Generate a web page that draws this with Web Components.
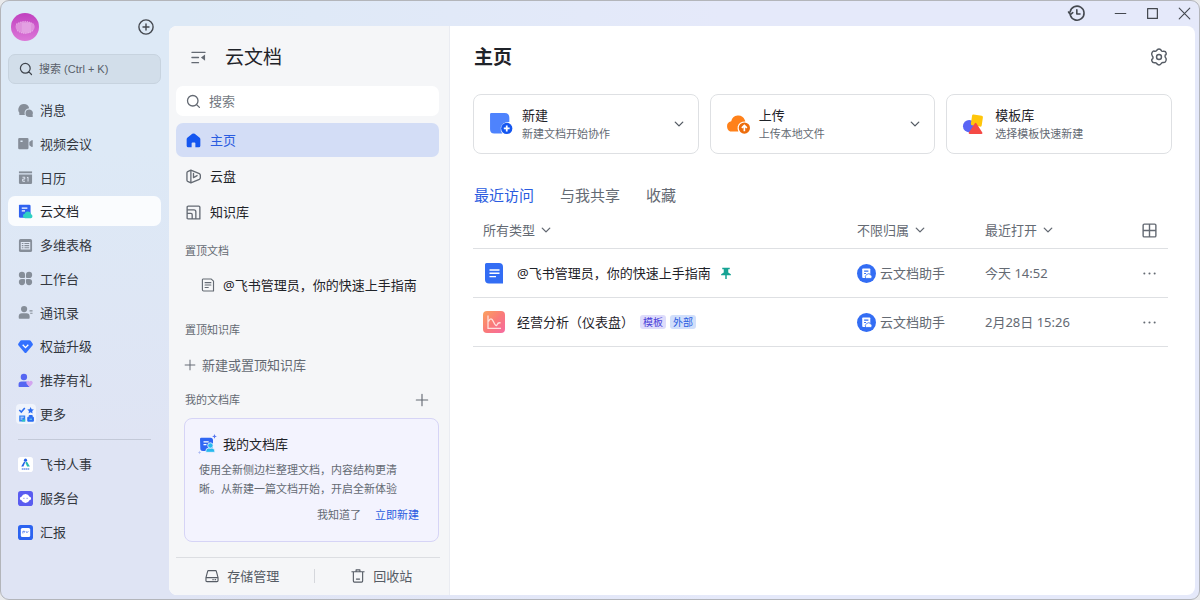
<!DOCTYPE html>
<html lang="zh-CN">
<head>
<meta charset="utf-8">
<meta name="viewport" content="width=device-width, initial-scale=1">
<title>云文档</title>
<style>
  html { background: #e9eaec; }
  body {
    margin: 0;
    font: 13px/20px "Noto Sans", "Noto Sans CJK SC", sans-serif;
    color: #1f2329;
  }
</style>
</head>
<body>
<app-window>
  <nav-rail slot="rail"></nav-rail>
  <window-bar slot="bar"></window-bar>
  <docs-panel slot="panel"></docs-panel>
  <home-page slot="page"></home-page>
</app-window>

<script>
const BASE = `
  *, *::before { box-sizing: border-box; }
  button, select, input { font: inherit; color: inherit; border: 0; background: none; padding: 0; margin: 0; }
  button { cursor: pointer; text-align: left; }
  a { color: inherit; text-decoration: none; }
  h1, h2, h3, p { margin: 0; font-size: 13px; font-weight: 400; }
`;

function define(name, html, setup) {
  const template = document.createElement('template');
  template.innerHTML = html;
  customElements.define(name, class extends HTMLElement {
    constructor() {
      super();
      this.attachShadow({ mode: 'open' }).append(template.content.cloneNode(true));
    }
    connectedCallback() { if (setup) setup(this, this.shadowRoot); }
  });
}

/* Every icon is drawn on a 16-unit grid unless BOXES gives it its own. */
const line = (d, w = 1.3) => `<path d="${d}" fill="none" stroke="currentColor" stroke-width="${w}" stroke-linecap="round" stroke-linejoin="round"/>`;
const ICONS = {
  avatar: `<defs><linearGradient id="g" x1="0" y1="0" x2="0" y2="1"><stop offset="0" stop-color="#c040bf"/><stop offset="1" stop-color="#dc78d8"/></linearGradient></defs>
    <circle cx="8" cy="8" r="8" fill="url(#g)"/><path d="M3.2 6.2Q8 3.4 12.8 6.2Q14.4 8 12.6 10.2Q8 13.4 3.6 10.2Q1.8 8 3.2 6.2z" fill="#de91dc"/>
    <path d="M6.2 5.6h5.2v5.6H6.2z" fill="#e3a0e2"/><path d="M3 6.4Q8 3.2 13 6.4M3.4 10Q8 13.2 12.6 10" fill="none" stroke="#f3c8f1" stroke-width=".5" stroke-dasharray=".5 .8"/>`,
  addCircle: line('M8 .9a7.1 7.1 0 1 0 0 14.2A7.1 7.1 0 0 0 8 .9zM8 5v6M5 8h6', 1.4),
  search: line('M7.2 1.6a5.6 5.6 0 1 0 0 11.2 5.6 5.6 0 0 0 0-11.2zM11.3 11.3l3 3', 1.4),
  chat: `<path d="M6.2 1.2a5.8 5.8 0 0 1 5.7 4.4A5.2 5.2 0 0 0 7 11c0 .7.1 1.2.4 1.8H1.9c-.5 0-.9-.5-.7-1l.4-1.2A5.8 5.8 0 0 1 6.2 1.2z" fill="currentColor"/><path d="M12 6.9a3.9 3.9 0 0 1 3.5 5.7l.3 1.5c.1.4-.2.8-.6.8H12a4 4 0 1 1 0-8z" fill="currentColor"/>`,
  video: `<path fill-rule="evenodd" d="M1.5 2h8.400q1.300 0 1.300 1.300v9.400q0 1.300-1.300 1.300H1.500Q.2 14 .2 12.700V3.300Q.2 2 1.500 2zM2.600 4.800v1.500h2.300V4.800z" fill="currentColor"/><path d="M12.100 6.300l2.500-1.800q1.100-.6 1.100.6v5.900q0 1.200-1.100.6l-2.500-1.800z" fill="currentColor"/>`,
  calendar: `<path d="M1 1.500h14v2H1z" fill="currentColor"/><path d="M1 4.800h14v8.900q0 1.300-1.300 1.300H2.300Q1 15 1 13.700z" fill="currentColor"/><path d="M4.800 7.700h2.400v2H5v2.300h2.500M9.500 8.300l1.200-.7V12.300" fill="none" stroke="#e3eaf5" stroke-width="1"/>`,
  docs: `<path d="M1 1.500Q1 .7 1.800.7H12q1.400 0 1.400 1.500V14.600H2.500Q1 14.600 1 13z" fill="#2f62f0"/><path d="M4 4.500h6M4 7.300h3.500" stroke="#fff" stroke-width="1.300"/><path d="M7.400 15.200a2.500 2.500 0 0 1-.3-4.900A3.600 3.600 0 0 1 14 11a2.200 2.200 0 0 1-.3 4.200z" fill="#2fd0c3"/>`,
  base: `<rect x="1" y="1" width="14" height="14" rx="1.800" fill="currentColor"/><path d="M3.500 4.700h9v6.900h-9zM3.500 7h9M3.500 9.300h9M6.300 4.700v6.900" fill="none" stroke="#dfe7f4" stroke-width="1.100"/>`,
  apps: `<path d="M4.200.9A3.300 3.300 0 0 1 7.500 4.200V6.500q0 1-1 1H4.200a3.300 3.300 0 1 1 0-6.600zM11.800.9a3.300 3.300 0 1 1 0 6.600H9.500q-1 0-1-1V4.200A3.300 3.300 0 0 1 11.800.9zM4.200 15.100a3.300 3.300 0 1 1 0-6.600H6.500q1 0 1 1v2.300a3.300 3.300 0 0 1-3.300 3.300zM11.800 15.100a3.300 3.300 0 0 1-3.300-3.300V9.500q0-1 1-1h2.300a3.300 3.300 0 1 1 0 6.600z" fill="currentColor"/>`,
  contacts: `<circle cx="6.500" cy="4.300" r="3.300" fill="currentColor"/><path d="M.8 13.800V12q0-3.200 3.400-3.200H9q3.400 0 3.400 3.200v1.800q0 .8-.8.8H1.600q-.8 0-.8-.8z" fill="currentColor"/><path d="M12.300 6.300h3.200M13 8.800h2.500" stroke="currentColor" stroke-width="1.200"/>`,
  gem: `<path d="M3.800 1.200h8.400q.8 0 1.300.6l2.200 3.200q.5.900-.1 1.600l-6.500 7.700q-1.100 1.200-2.200 0L.4 6.600q-.6-.7-.1-1.600l2.200-3.200q.5-.6 1.300-.6z" fill="#3270ff"/><path d="M5 6.200l3 3 3-3" fill="none" stroke="#fff" stroke-width="1.400"/>`,
  invite: `<circle cx="6.300" cy="4.200" r="3.400" fill="#5566f2"/><path d="M.6 14V12q0-3 3.200-3h4.900q1.300 0 1.600 1 0 3 1.900 4.800H1.400q-.8 0-.8-.8z" fill="#5566f2"/><path d="M12.300 14.800L9.300 11.600q-1.100-1.700.3-2.900 1.500-.9 2.700.5 1.200-1.400 2.700-.5 1.400 1.200.3 2.900z" fill="#d3a5ef"/>`,
  more: `<rect width="20" height="20" rx="4" fill="#f0f4fc"/><path d="M3.300 6l2 2 3.500-4" fill="none" stroke="#2b6df2" stroke-width="1.600"/><path d="M14.600 3l1 2.200 2.300.3-1.700 1.600.4 2.400-2-1.200-2.100 1.200.5-2.400-1.700-1.600 2.300-.3z" fill="#2b6df2"/><path d="M3.200 11.500h6v6h-6z" fill="#2f80f5"/><path d="M4.500 13.200h3.200M4.500 15h2" stroke="#fff" stroke-width=".8"/><path d="M11.800 13.300h5.600v3.900h-5.600zM13.200 13v-1.500h3V13" fill="#2b6df2" stroke="#2b6df2"/><path d="M5.700 17.500q0-2.300 3.500-2.300V17.500z" fill="#30c8be"/><path d="M13.500 15.200h2.500" stroke="#73d7ef"/>`,
  hr: `<rect width="16" height="16" rx="3" fill="#fff"/><circle cx="8" cy="3.400" r="1.700" fill="#2361e8"/><path d="M7.800 5.200l-2 4.800H3.400L6.400 5.100z" fill="#2361e8"/><path d="M8.400 5.200h1.400l2.900 4.800H9.700L8 6.400z" fill="#28b9ae"/><path d="M4 12.800h8" stroke="#6d93ec" stroke-width="1.600" stroke-dasharray="1.700 .4"/>`,
  desk: `<rect width="16" height="16" rx="3" fill="#5a5cf0"/><path d="M8 3.300a4.600 4.600 0 0 1 4.300 2.900q1.700.1 1.700 1.900T12.200 9.900A4.600 4.600 0 0 1 8 12.800 4.600 4.600 0 0 1 3.800 9.900Q2 9.900 2 8.100T3.700 6.200A4.600 4.600 0 0 1 8 3.300z" fill="#fff"/><path d="M6.300 7.300v1M9.700 7.300v1" stroke="#5a5cf0"/>`,
  report: `<rect width="16" height="16" rx="3" fill="#2c63f0"/><rect x="3" y="3.200" width="10" height="9.600" rx="1.600" fill="#fff"/><path d="M5.200 9V6.700h1.700V8M8.500 6.600l1 1.700 1.500-1.700" fill="none" stroke="#4877ee" stroke-width=".9"/>`,
  history: line('M2.200 9.700A6.600 6.600 0 1 0 2 6.500M.5 6.600L2.200 9 4.500 7.200M8.300 4.500v4h3', 1.500),
  minimize: line('M1.500 8h13', 1.400), maximize: line('M2 2h12v12h-12z', 1.500), close: line('M1.500 1.500l13 13M14.500 1.500l-13 13', 1.400),
  fold: line('M1 2.500h14M1 8h7M1 13.500h7', 1.400) + `<path d="M15 4.800v6.600L10.600 8.100z" fill="currentColor"/>`,
  home: `<path d="M6.700.9q1.300-.8 2.600 0l5 3.800q1 .7 1 1.900V13.700q0 1.600-1.600 1.600H10V11q0-1-1-1H7q-1 0-1 1v4.300H2.300Q.7 15.300.7 13.700V6.600q0-1.200 1-1.900z" fill="#1456f0"/>`,
  drive: line('M5.200 1.200L1.800 2.800Q1 3.200 1 4v8q0 .8.800 1.200l3.400 1.600V1.200l9 3.800Q15.300 5.600 15.300 6.600v2.800q0 1-1.100 1.600l-9 3.800M8 4.800v4.400M8 9.200l3.800-2.200', 1.400),
  wiki: line('M2.400 1.200h11.200q1.200 0 1.200 1.200V14.800H2.200Q1.200 14.800 1.200 13.800V2.400q0-1.200 1.200-1.200zM1.200 5.200h7.300q2 0 2 2v7.600M1.200 9h4.100q1.300 0 1.300 1.300v4.500', 1.400),
  page: line('M2.300 1.200h9.500L14.300 3.500V14.800H3Q1.600 14.800 1.600 13.500V2.300Q1.600 1.200 2.300 1.200zM4.700 5.300h6.600M4.700 8h6.600M4.700 10.800h3.600'),
  plus: line('M8 1.500v13M1.500 8h13'),
  library: `<path d="M1 5Q1 3.800 2.200 3.800H11.500q2.500 0 2.500 2.500V17H4Q1.300 17 1.300 14.500z" fill="#2f66f3"/><path d="M4.500 7.800h5.200M4.500 10.600h3" stroke="#fff" stroke-width="1.300"/><path d="M6.800 18.300V17q0-3 3.200-3h2.600q3.200 0 3.200 3v1.300z" fill="#27b9ee" stroke="#f3f3ff" stroke-width=".8"/><circle cx="11.400" cy="11.500" r="2.700" fill="#27b9ee" stroke="#f3f3ff" stroke-width=".8"/><path d="M15.500 0l.7 1.700 1.700.7-1.700.7-.7 1.700-.7-1.700-1.700-.7 1.700-.7z" fill="#5575ee"/><path d="M.5 16.800l.5 1.200 1.200.5-1.200.5-.5 1.200-.5-1.200-1.200-.5 1.200-.5z" fill="#a9b7f3"/>`,
  storage: line('M4 1.800h8q.8 0 1 .8l1.900 7.200v3.400q0 1.200-1.200 1.200H2.300q-1.200 0-1.200-1.200V9.800L3 2.600q.2-.8 1-.8zM1.200 9.800h13.600M11.500 12.200h.6M9 12.200h.4'),
  trash: line('M1 3.200h14M2.700 3.200V13.800q0 1.200 1.200 1.200h8.200q1.200 0 1.200-1.200V3.200M5.800 3V1h4.400v2M6.200 11.500h3.600'),
  gear: line('M6.500 1.500Q8 .3 9.500 1.500L10.400 2.600Q11 3.200 12 2.900 13.900 2.700 14.300 4.400T13.500 6.300Q12.900 8 14.300 9.300 14.800 11 13.700 12.300 12.900 13.200 11.300 12.900 10.400 13 9.900 13.900 8.500 15.800 6.700 14.600L5.800 13.500Q5.200 12.900 4.200 13.100 2.300 13.300 1.700 11.600T2.500 9.600Q3.200 8 2 7 .9 5.500 1.900 3.900T4 2.900Q5.200 3.100 5.700 2.500zM8 5.800a2.200 2.200 0 1 0 0 4.400 2.200 2.200 0 0 0 0-4.400z'),
  create: `<path d="M1 2.200Q1 1 2.200 1H15q4.500 0 4.500 4.500V9.500Q13 9.500 11.300 14.500q-.6 3.500 1.500 6H5q-4 0-4-4z" fill="#4e83fd"/><circle cx="17" cy="15.800" r="5.400" fill="#1456f0"/><path d="M17 13v5.600M14.200 15.800h5.600" stroke="#fff" stroke-width="1.700"/>`,
  upload: `<path d="M6 18.800a5 5 0 0 1-1-9.900A6.800 6.800 0 0 1 18 7.700q.5 1 .5 1.500Q12.500 9.300 11.200 14q-.5 2.600.7 4.800z" fill="#ff811a"/><circle cx="17.600" cy="15.400" r="5.400" fill="#ed6d0c"/><path d="M17.600 18.500V13M15.200 15.200l2.400-2.400 2.400 2.400" fill="none" stroke="#fff" stroke-width="1.600"/>`,
  template: `<circle cx="7.200" cy="13.200" r="6.200" fill="#5a64f5"/><path d="M11.500 1.500l8.200 1.300q1.400.2 1.200 1.600l-1.200 8q-.3 1.400-1.700 1.200l-8-1.300Q8.600 12 8.900 10.600l1.200-8q.2-1.300 1.400-1.100z" fill="#ffc60a"/><path d="M12.700 10.500q.9-1.400 1.800 0l5.800 9q.7 1.400-.8 1.400H7.700q-1.500 0-.8-1.400z" fill="#f54a45"/>`,
  chevron: line('M3 5.500l5 5 5-5', 1.800),
  grid: line('M2.500 1.200h11q1.300 0 1.300 1.300v11q0 1.300-1.300 1.300h-11q-1.300 0-1.300-1.300v-11q0-1.300 1.300-1.300zM8 1.200v13.600M1.200 8h13.600', 1.500),
  dots: `<circle cx="2.500" cy="8" r="1.100" fill="currentColor"/><circle cx="8" cy="8" r="1.100" fill="currentColor"/><circle cx="13.500" cy="8" r="1.100" fill="currentColor"/>`,
  docFile: `<path d="M2 2.500Q2 1 3.500 1H16q4 0 4 4v16.500H6q-4 0-4-4z" fill="#336df4"/><path d="M6.500 8h10M6.500 11.300h10M6.500 14.600h6.500" stroke="#fff" stroke-width="1.400"/>`,
  chartFile: `<defs><linearGradient id="g" x1="0" y1="0" x2="1" y2="1"><stop offset="0" stop-color="#fba25f"/><stop offset=".5" stop-color="#fa7b78"/><stop offset="1" stop-color="#f66aa2"/></linearGradient></defs><rect width="22" height="22" rx="4" fill="url(#g)"/><path d="M5 4.500v12.800h13M5.500 10.500q2.500-5.500 5 .2t3.600 3 3.600-1.700" fill="none" stroke="#ffe0dc" stroke-width="1.300"/>`,
  pin: `<path d="M3 1h10v2h-2v4.200l3.500 2.300v1.400H9V16H7v-5.100H1.500V9.500L5 7.200V3H3z" fill="#16a394"/>`,
  owner: `<circle cx="10" cy="10" r="10" fill="#336df4"/><path d="M5.500 5.500Q5.500 4.800 6.200 4.800h7q.8 0 .8.800V14.800H6.500q-1 0-1-1z" fill="#fff"/><path d="M7.500 7.500h4.500M7.500 10h2" stroke="#336df4" stroke-width="1.200"/><path d="M10 15.200a1.900 1.900 0 0 1 0-3.600 2.500 2.500 0 0 1 4.600.3 1.700 1.700 0 0 1 0 3.300z" fill="#fff" stroke="#336df4" stroke-width=".9"/>`
};
const BOXES = { more: 20, library: 20, create: 23, upload: 23, template: 22, docFile: 22, chartFile: 22, owner: 20 };

define('ui-icon', `<style>:host { display: block; flex: none; width: var(--size, 16px); height: var(--size, 16px); } svg { display: block; width: 100%; height: 100%; overflow: visible; }</style><div></div>`,
  (host, root) => {
    const name = host.getAttribute('name');
    const size = host.getAttribute('size');
    const box = BOXES[name] || 16;
    host.style.setProperty('--size', size + 'px');
    root.querySelector('div').innerHTML = `<svg viewBox="0 0 ${box} ${box}" width="${size}" height="${size}" aria-hidden="true">${ICONS[name]}</svg>`;
  });

/* ---------- window frame ---------- */
define('app-window', `<style>${BASE}
  :host {
    box-sizing: border-box; display: grid; min-height: 100vh;
    grid-template: 25px 1fr / 168px 1fr;
    border: 1px solid #b3b5ba; border-radius: 9px; padding: 0 4px 4px 0;
    background: linear-gradient(90deg, rgba(229,233,250,0) 15%, #e5e9fa 60%), linear-gradient(180deg, #dde9f6 25%, #dfe4f4 75%);
  }
  .rail { grid-row: 1 / 3; }
  .body { display: grid; grid-template-columns: 281px 1fr; background: #fff; border-radius: 8px; overflow: hidden; }
</style>
<div class="rail"><slot name="rail"></slot></div>
<slot name="bar"></slot>
<div class="body"><slot name="panel"></slot><slot name="page"></slot></div>`);

define('window-bar', `<style>${BASE}
  :host { display: flex; align-items: center; justify-content: flex-end; gap: 19px; padding-right: 4px; color: #44484f; }
  .history { margin-right: 10px; }
</style>
<button class="history" aria-label="历史"><ui-icon name="history" size="17"></ui-icon></button>
<button aria-label="最小化"><ui-icon name="minimize" size="13"></ui-icon></button>
<button aria-label="最大化"><ui-icon name="maximize" size="13"></ui-icon></button>
<button aria-label="关闭"><ui-icon name="close" size="13"></ui-icon></button>`);

/* ---------- left rail ---------- */
define('rail-item', `<style>${BASE}
  :host { display: block; color: #33373e; }
  a { display: flex; align-items: center; gap: 7px; height: 30px; padding-left: 10px; border-radius: 7px; }
  :host([active]) a { background: #fafcfe; color: #1f2329; }
  .icon { display: flex; align-items: center; justify-content: center; width: 15px; color: #868e99; }
</style>
<a href="#"><span class="icon"></span><slot></slot></a>`,
  (host, root) => {
    const name = host.getAttribute('icon');
    root.querySelector('.icon').innerHTML = `<ui-icon name="${name}" size="${name === 'more' ? 20 : 15}"></ui-icon>`;
    if (host.hasAttribute('active')) root.querySelector('a').setAttribute('aria-current', 'page');
  });

define('nav-rail', `<style>${BASE}
  :host { display: block; padding: 12px 8px 0 7px; }
  header { display: flex; align-items: center; justify-content: space-between; padding: 0 7px 0 3px; color: #44484f; }
  .search {
    display: flex; align-items: center; gap: 6px; width: 100%; height: 30px; margin: 13px 0 11px;
    padding-left: 10px; border: 1px solid #c7d3df; border-radius: 7px; background: #d2deea;
    font: 11px/16px "Liberation Sans", "Noto Sans CJK SC", sans-serif; color: #595f69;
  }
  .search ui-icon { color: #3f444c; }
  nav { display: flex; flex-direction: column; justify-content: space-between; min-height: 334px; }
  hr { height: 1px; margin: 10px 10px 9px; border: 0; background: #c3c9d8; }
  nav.extra { justify-content: flex-start; gap: 4px; min-height: 0; }
</style>
<header>
  <button aria-label="个人头像"><ui-icon name="avatar" size="28"></ui-icon></button>
  <button aria-label="新建"><ui-icon name="addCircle" size="16"></ui-icon></button>
</header>
<button class="search"><ui-icon name="search" size="14"></ui-icon><span>搜索 (Ctrl + K)</span></button>
<nav aria-label="主导航">
  <rail-item icon="chat">消息</rail-item>
  <rail-item icon="video">视频会议</rail-item>
  <rail-item icon="calendar">日历</rail-item>
  <rail-item icon="docs" active>云文档</rail-item>
  <rail-item icon="base">多维表格</rail-item>
  <rail-item icon="apps">工作台</rail-item>
  <rail-item icon="contacts">通讯录</rail-item>
  <rail-item icon="gem">权益升级</rail-item>
  <rail-item icon="invite">推荐有礼</rail-item>
  <rail-item icon="more">更多</rail-item>
</nav>
<hr>
<nav class="extra" aria-label="应用">
  <rail-item icon="hr">飞书人事</rail-item>
  <rail-item icon="desk">服务台</rail-item>
  <rail-item icon="report">汇报</rail-item>
</nav>`);

/* ---------- docs panel ---------- */
define('docs-panel', `<style>${BASE}
  :host { box-sizing: border-box; display: flex; flex-direction: column; padding: 0 10px 0 7px; background: #f5f6f8; border-right: 1px solid #eaecf2; }
  header { display: flex; align-items: center; gap: 19px; padding: 17px 15px 15px; color: #646a73; }
  h1 { font-size: 19px; line-height: 28px; color: #1f2329; }
  label { display: flex; align-items: center; gap: 8px; height: 30px; padding: 0 10px; border-radius: 7px; background: #fff; color: #646a73; }
  input { flex: 1; min-width: 0; outline: 0; }
  input::placeholder { color: #737881; opacity: 1; }
  .links { display: grid; gap: 2px; margin-top: 7px; }
  .links a { display: flex; align-items: center; gap: 9px; height: 34px; padding-left: 10px; border-radius: 7px; }
  .links ui-icon { color: #646a73; }
  .links a[aria-current] { background: #d3ddf6; color: #2a5ce0; }
  h2 { display: flex; align-items: center; justify-content: space-between; height: 20px; padding: 0 10px 0 9px; font-size: 11px; color: #646a73; }
  .links + h2 { margin-top: 12px; }
  .pinned { display: flex; align-items: center; gap: 8px; height: 30px; padding-left: 25px; margin: 9px 0 20px; white-space: nowrap; }
  .pinned ui-icon, .add, h2 button { color: #646a73; }
  .add { display: flex; align-items: center; gap: 6px; height: 30px; margin: 10px 0; padding-left: 8px; }
  section { margin: 8px 0 0 8px; padding: 15px 19px 16px 14px; border: 1px solid #d6d4f6; border-radius: 8px; background: #f3f3fe; }
  h3 { display: flex; align-items: center; gap: 4px; }
  section p { margin-top: 6px; padding-right: 16px; font-size: 11px; line-height: 19px; color: #646a73; }
  .actions { display: flex; justify-content: flex-end; gap: 14px; margin-top: 7px; font-size: 11px; color: #646a73; }
  .actions .go { color: #2a5ce0; }
  footer { display: grid; grid-template-columns: 10fr 1px 9fr; align-items: center; justify-items: center; height: 38px; margin: auto -1px 0 0; padding-bottom: 2px; border-top: 1px solid #dcdee2; color: #565c65; }
  footer i { width: 1px; height: 14px; background: #d5d7dc; }
  footer a { display: flex; align-items: center; gap: 8px; }
  footer a:first-child { padding-right: 6px; }
  footer a:last-child { padding-left: 8px; }
</style>
<header><button aria-label="收起侧栏"><ui-icon name="fold" size="15"></ui-icon></button><h1>云文档</h1></header>
<label><ui-icon name="search" size="15"></ui-icon><input type="search" placeholder="搜索" aria-label="搜索"></label>
<nav class="links">
  <a href="#" aria-current="page"><ui-icon name="home" size="15"></ui-icon><span>主页</span></a>
  <a href="#"><ui-icon name="drive" size="15"></ui-icon><span>云盘</span></a>
  <a href="#"><ui-icon name="wiki" size="15"></ui-icon><span>知识库</span></a>
</nav>
<h2>置顶文档</h2>
<a class="pinned" href="#"><ui-icon name="page" size="14"></ui-icon><span>@飞书管理员，你的快速上手指南</span></a>
<h2>置顶知识库</h2>
<button class="add"><ui-icon name="plus" size="12"></ui-icon><span>新建或置顶知识库</span></button>
<h2><span>我的文档库</span><button aria-label="新建文档"><ui-icon name="plus" size="14"></ui-icon></button></h2>
<section>
  <h3><ui-icon name="library" size="20"></ui-icon><span>我的文档库</span></h3>
  <p>使用全新侧边栏整理文档，内容结构更清晰。从新建一篇文档开始，开启全新体验</p>
  <div class="actions"><button>我知道了</button><button class="go">立即新建</button></div>
</section>
<footer>
  <a href="#"><ui-icon name="storage" size="14"></ui-icon><span>存储管理</span></a><i></i>
  <a href="#"><ui-icon name="trash" size="14"></ui-icon><span>回收站</span></a>
</footer>`);

/* ---------- home page ---------- */
define('quick-card', `<style>${BASE}
  :host { display: block; }
  button { display: grid; grid-template-columns: 24px 1fr 12px; align-items: center; column-gap: 9px; width: 100%; height: 60px; padding: 0 13px 0 15px; border: 1px solid #dee0e3; border-radius: 8px; background: #fff; }
  b, small { display: block; font-weight: 400; }
  b { line-height: 20px; }
  small { font-size: 11px; line-height: 18px; color: #646a73; }
</style>
<button><slot name="icon"></slot><span><b><slot></slot></b><small><slot name="note"></slot></small></span><slot name="arrow"></slot></button>`);

define('filter-select', `<style>${BASE}
  :host { display: inline-grid; grid-template-columns: 1fr 12px; align-items: center; column-gap: 4px; color: #646a73; }
  select { grid-area: 1 / 1 / 2 / 3; appearance: none; outline: 0; height: 20px; padding-right: 16px; }
  ui-icon { grid-area: 1 / 2; pointer-events: none; }
</style>
<select></select><ui-icon name="chevron" size="12"></ui-icon>`,
  (host, root) => {
    const select = root.querySelector('select');
    select.setAttribute('aria-label', host.getAttribute('value'));
    select.replaceChildren(new Option(host.getAttribute('value')));
  });

define('doc-table', `<style>${BASE}
  :host { display: block; }
  table { width: 100%; border-collapse: separate; border-spacing: 0; table-layout: fixed; }
  th, td { padding: 0 10px; border-bottom: 1px solid #dee0e3; text-align: left; font-weight: 400; vertical-align: middle; color: #646a73; white-space: nowrap; }
  th { height: 37px; } td { height: 49px; }
  .owner { width: 128px; } .time { width: 156px; } .tools { width: 37px; }
  .tools, td:last-child { padding: 0 11px; }
  .cell { display: flex; align-items: center; }
  .name { color: #1f2329; }
  .name a { margin-left: 12px; }
  .pin { margin-left: 9px; }
  .by { gap: 4px; }
  .tags { display: flex; gap: 4px; margin-left: 6px; }
  .tag { padding: 0 3px; border-radius: 3px; font-size: 10px; line-height: 14px; background: #dedcfb; color: #4a3fd8; }
  .tag.out { background: #d1dffb; color: #2a5ce0; }
  button { display: block; }
</style>
<table>
  <thead><tr>
    <th><filter-select value="所有类型"></filter-select></th>
    <th class="owner"><filter-select value="不限归属"></filter-select></th>
    <th class="time"><filter-select value="最近打开"></filter-select></th>
    <th class="tools"><button aria-label="宫格视图"><ui-icon name="grid" size="15"></ui-icon></button></th>
  </tr></thead>
  <tbody>
    <tr>
      <td><div class="cell name"><ui-icon name="docFile" size="22"></ui-icon><a href="#">@飞书管理员，你的快速上手指南</a><ui-icon class="pin" name="pin" size="12"></ui-icon></div></td>
      <td><div class="cell by"><ui-icon name="owner" size="19"></ui-icon><span>云文档助手</span></div></td>
      <td>今天 14:52</td>
      <td><button aria-label="更多操作"><ui-icon name="dots" size="15"></ui-icon></button></td>
    </tr>
    <tr>
      <td><div class="cell name"><ui-icon name="chartFile" size="22"></ui-icon><a href="#">经营分析（仪表盘）</a><span class="tags"><span class="tag">模板</span><span class="tag out">外部</span></span></div></td>
      <td><div class="cell by"><ui-icon name="owner" size="19"></ui-icon><span>云文档助手</span></div></td>
      <td>2月28日 15:26</td>
      <td><button aria-label="更多操作"><ui-icon name="dots" size="15"></ui-icon></button></td>
    </tr>
  </tbody>
</table>`);

define('home-page', `<style>${BASE}
  :host { box-sizing: border-box; display: block; min-width: 0; padding: 17px 23px 0; }
  header { display: flex; align-items: center; justify-content: space-between; padding: 0 4px 0 1px; color: #565c65; }
  h1 { font-size: 19px; line-height: 28px; font-weight: 700; color: #1f2329; }
  .cards { display: grid; grid-template-columns: repeat(3, 1fr); gap: 11px; margin-top: 23px; }
  .cards ui-icon[slot=arrow] { color: #565c65; }
  .tabs { display: flex; gap: 26px; margin-top: 29px; padding-left: 1px; font-size: 15px; line-height: 24px; color: #646a73; }
  .tabs [aria-selected=true] { color: #2a5ce0; }
  doc-table { margin: 5px 4px 0 0; }
</style>
<header><h1>主页</h1><button aria-label="设置"><ui-icon name="gear" size="18"></ui-icon></button></header>
<div class="cards">
  <quick-card><ui-icon slot="icon" name="create" size="24"></ui-icon>新建<span slot="note">新建文档开始协作</span><ui-icon slot="arrow" name="chevron" size="12"></ui-icon></quick-card>
  <quick-card><ui-icon slot="icon" name="upload" size="24"></ui-icon>上传<span slot="note">上传本地文件</span><ui-icon slot="arrow" name="chevron" size="12"></ui-icon></quick-card>
  <quick-card><ui-icon slot="icon" name="template" size="22"></ui-icon>模板库<span slot="note">选择模板快速新建</span></quick-card>
</div>
<div class="tabs" role="tablist">
  <button role="tab" aria-selected="true">最近访问</button>
  <button role="tab" aria-selected="false">与我共享</button>
  <button role="tab" aria-selected="false">收藏</button>
</div>
<doc-table></doc-table>`);
</script>
</body>
</html>
